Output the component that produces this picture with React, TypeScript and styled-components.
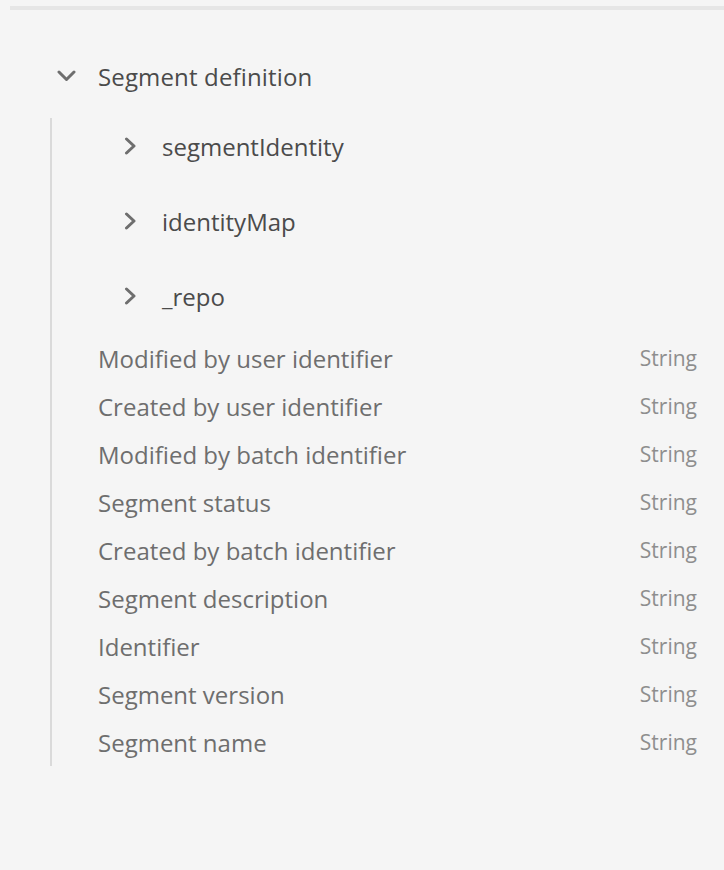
import React from "react";
import styled, { createGlobalStyle } from "styled-components";

const GlobalStyle = createGlobalStyle`
  html, body {
    margin: 0;
    padding: 0;
    background: #f5f5f5;
  }
  body {
    font-family: "Open Sans", "Noto Sans", sans-serif;
    -webkit-font-smoothing: antialiased;
  }
`;

const Page = styled.div`
  width: 724px;
  min-height: 870px;
  background: #f5f5f5;
  padding-top: 6px;
  box-sizing: border-box;
`;

const TopRule = styled.div`
  margin-left: 10px;
  height: 4px;
  background: #e6e6e6;
`;

const Tree = styled.div`
  margin-top: 38px;
  display: flex;
  flex-direction: column;
`;

const HeaderRow = styled.div`
  display: flex;
  align-items: center;
  height: 56px;
  padding-left: 57px;
  gap: 22px;
  font-size: 24px;
  letter-spacing: 0.15px;
  color: #4b4b4b;
`;

const GroupBody = styled.div`
  margin-top: 14px;
  margin-left: 50px;
  border-left: 2px solid #dadada;
  display: flex;
  flex-direction: column;
`;

const ChildList = styled.div`
  display: flex;
  flex-direction: column;
  gap: 19px;
  margin-bottom: 10px;
`;

const ChildRow = styled.div`
  display: flex;
  align-items: center;
  height: 56px;
  padding-left: 72px;
  gap: 25px;
  font-size: 24px;
  color: #4b4b4b;
`;

const LeafRow = styled.div`
  display: flex;
  justify-content: space-between;
  align-items: center;
  height: 48px;
  padding-left: 46px;
  padding-right: 27px;
  font-size: 24px;
`;

const LeafName = styled.span`
  color: #6e6e6e;
`;

const LeafType = styled.span`
  color: #8e8e8e;
  font-size: 21px;
`;

const ChevronDown = () => (
  <svg width="19" height="12" viewBox="0 0 19 12" aria-hidden>
    <path
      d="M2 2 L9.5 9.5 L17 2"
      fill="none"
      stroke="#6e6e6e"
      strokeWidth="3"
      strokeLinecap="round"
      strokeLinejoin="round"
    />
  </svg>
);

const ChevronRight = () => (
  <svg width="13" height="18" viewBox="0 0 13 18" aria-hidden>
    <path
      d="M2.5 2 L10 9 L2.5 16"
      fill="none"
      stroke="#6e6e6e"
      strokeWidth="3"
      strokeLinecap="round"
      strokeLinejoin="round"
    />
  </svg>
);

const children = ["segmentIdentity", "identityMap", "_repo"];

const leaves = [
  "Modified by user identifier",
  "Created by user identifier",
  "Modified by batch identifier",
  "Segment status",
  "Created by batch identifier",
  "Segment description",
  "Identifier",
  "Segment version",
  "Segment name",
];

export default function App() {
  return (
    <>
      <GlobalStyle />
      <Page>
        <TopRule />
        <Tree>
          <HeaderRow>
            <ChevronDown />
            <span>Segment definition</span>
          </HeaderRow>
          <GroupBody>
            <ChildList>
              {children.map((c) => (
                <ChildRow key={c}>
                  <ChevronRight />
                  <span>{c}</span>
                </ChildRow>
              ))}
            </ChildList>
            {leaves.map((l) => (
              <LeafRow key={l}>
                <LeafName>{l}</LeafName>
                <LeafType>String</LeafType>
              </LeafRow>
            ))}
          </GroupBody>
        </Tree>
      </Page>
    </>
  );
}
